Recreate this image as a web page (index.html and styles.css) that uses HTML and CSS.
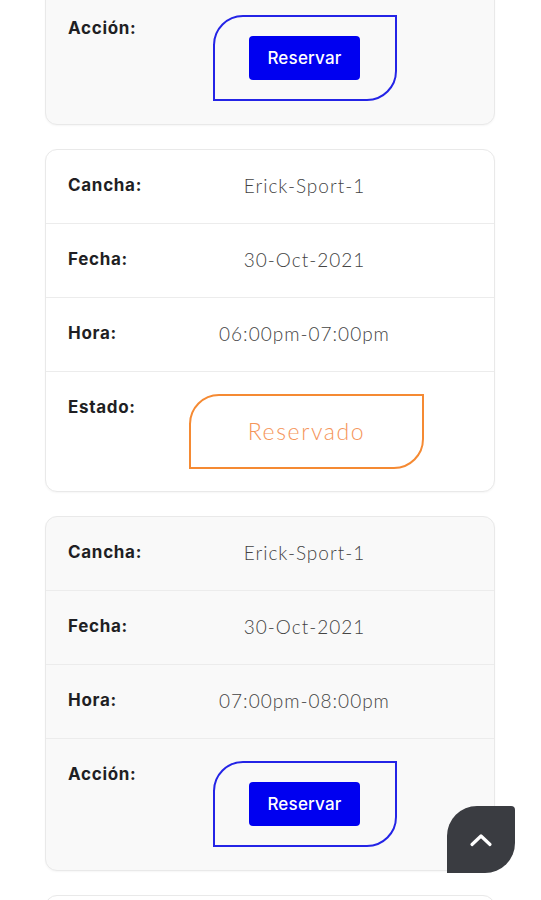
FILE: index.html
```html
<!DOCTYPE html>
<html lang="es">
<head>
    <meta charset="UTF-8">
    <meta name="viewport" content="width=device-width, initial-scale=1.0">
    <title>Reservas</title>
    <link rel="stylesheet" href="styles.css">
</head>
<body>
    <!-- Lista de horarios (vista movil) -->
    <div class="reservas">
        <div class="card">
            <div class="fila"><span class="etiqueta">Cancha:</span><span class="valor">Erick-Sport-1</span></div>
            <div class="fila"><span class="etiqueta">Fecha:</span><span class="valor">30-Oct-2021</span></div>
            <div class="fila"><span class="etiqueta">Hora:</span><span class="valor">05:00pm-06:00pm</span></div>
            <div class="fila fila-caja">
                <span class="etiqueta">Acción:</span>
                <div class="valor">
                    <div class="caja caja-accion"><button class="btn-reservar">Reservar</button></div>
                </div>
            </div>
        </div>

        <div class="card">
            <div class="fila"><span class="etiqueta">Cancha:</span><span class="valor">Erick-Sport-1</span></div>
            <div class="fila"><span class="etiqueta">Fecha:</span><span class="valor">30-Oct-2021</span></div>
            <div class="fila"><span class="etiqueta">Hora:</span><span class="valor">06:00pm-07:00pm</span></div>
            <div class="fila fila-caja fila-estado">
                <span class="etiqueta">Estado:</span>
                <div class="valor">
                    <div class="caja caja-estado">Reservado</div>
                </div>
            </div>
        </div>

        <div class="card">
            <div class="fila"><span class="etiqueta">Cancha:</span><span class="valor">Erick-Sport-1</span></div>
            <div class="fila"><span class="etiqueta">Fecha:</span><span class="valor">30-Oct-2021</span></div>
            <div class="fila"><span class="etiqueta">Hora:</span><span class="valor">07:00pm-08:00pm</span></div>
            <div class="fila fila-caja">
                <span class="etiqueta">Acción:</span>
                <div class="valor">
                    <div class="caja caja-accion"><button class="btn-reservar">Reservar</button></div>
                </div>
            </div>
        </div>

        <div class="card">
            <div class="fila"><span class="etiqueta">Cancha:</span><span class="valor">Erick-Sport-1</span></div>
            <div class="fila"><span class="etiqueta">Fecha:</span><span class="valor">30-Oct-2021</span></div>
        </div>
    </div>

    <!-- Boton volver arriba -->
    <a href="#" class="btn-arriba">
        <svg width="24" height="14" viewBox="0 0 24 14"><path d="M3 11.5 L12 3 L21 11.5" fill="none" stroke="#fff" stroke-width="3.2" stroke-linecap="round" stroke-linejoin="round"/></svg>
    </a>
</body>
</html>
```

FILE: styles.css
```css
/* Global */
body {
    margin: 0;
    background-color: #fff;
    font-family: 'Lato', sans-serif;
    overflow: hidden;
}

/* Lista */
.reservas {
    display: flex;
    flex-direction: column;
    gap: 24px;
    padding: 0 46px 0 45px;
    margin-top: -230px;
}

.card {
    background-color: #f9f9f9;
    border: 1px solid #e9e9e9;
    border-radius: 12px;
    box-shadow: 0 1px 2px rgba(0, 0, 0, 0.04);
    overflow: hidden;
}

.card:nth-child(even) {
    background-color: #fff;
}

/* Filas */
.fila {
    display: grid;
    grid-template-columns: 92px 1fr;
    align-items: center;
    padding: 24px 45px 26px 22px;
    line-height: 23px;
    border-bottom: 1px solid #ececec;
}

.fila:last-child {
    border-bottom: none;
}

.etiqueta {
    font-family: 'Inter', sans-serif;
    font-weight: 700;
    font-size: 17px;
    color: #1f1f24;
    letter-spacing: 0.7px;
}

.valor {
    text-align: center;
    font-family: 'Lato', sans-serif;
    font-weight: 300;
    font-size: 19px;
    color: #444;
    letter-spacing: 1px;
}

/* Filas con caja */
.fila-caja {
    align-items: start;
    padding: 22px 45px 23px 22px;
}

.fila-caja .etiqueta {
    padding-top: 2px;
}

.fila-estado {
    padding: 22px 45px 22px 22px;
}

.fila-estado .etiqueta {
    padding-top: 2px;
}

.caja {
    box-sizing: border-box;
    display: flex;
    align-items: center;
    justify-content: center;
    margin: 0 auto;
    border-radius: 30px 0 30px 0;
}

.caja-accion {
    width: 184px;
    height: 86px;
    border: 2px solid #2424e6;
}

.caja-estado {
    width: 235px;
    height: 75px;
    margin-left: 29px;
    border: 2px solid #f58a33;
    color: #f5955a;
    font-family: 'Lato', sans-serif;
    font-weight: 300;
    font-size: 23px;
    letter-spacing: 1.6px;
}

.btn-reservar {
    width: 111px;
    height: 44px;
    background-color: #0000f0;
    color: #fff;
    border: none;
    border-radius: 4px;
    font-family: 'Inter', sans-serif;
    font-weight: 500;
    font-size: 17px;
    letter-spacing: 0.2px;
    cursor: pointer;
}

/* Volver arriba */
.btn-arriba {
    position: fixed;
    left: 447px;
    top: 806px;
    width: 68px;
    height: 67px;
    display: flex;
    align-items: center;
    justify-content: center;
    background-color: #3a3c41;
    border-radius: 30px 4px 30px 0;
}
```
